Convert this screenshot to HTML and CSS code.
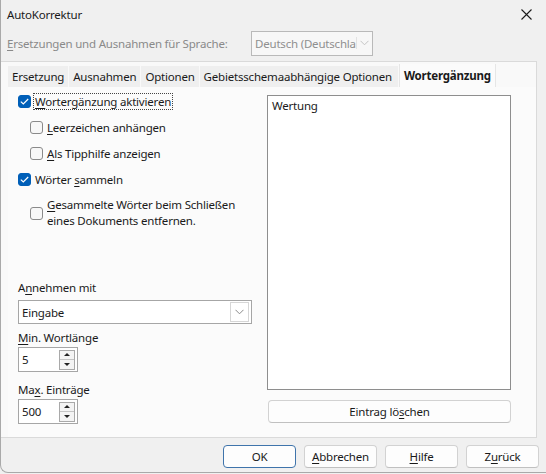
FILE: index.html
```html
<!DOCTYPE html>
<html lang="de">
<head>
    <meta charset="UTF-8">
    <title>AutoKorrektur</title>
    <link rel="stylesheet" href="styles.css">
</head>
<body>
    <div class="dialog">
        <div class="titlebar">
            <span class="title">AutoKorrektur</span>
            <svg class="close" width="11" height="11" viewBox="0 0 11 11">
                <path d="M0.5 0.5 L10.5 10.5 M10.5 0.5 L0.5 10.5" stroke="#1b1b1b" stroke-width="1.1" fill="none"/>
            </svg>
        </div>

        <div class="lang-row">
            <span class="lang-label"><u>E</u>rsetzungen und Ausnahmen für Sprache:</span>
            <div class="lang-combo">
                <span class="lang-value">Deutsch (Deutschla</span>
                <svg class="chev" width="9" height="6" viewBox="0 0 9 6"><path d="M0.5 0.8 L4.5 4.8 L8.5 0.8" stroke="#c4c4c4" fill="none"/></svg>
            </div>
        </div>

        <div class="notebook">
            <div class="tabs">
                <div class="tab">Ersetzung</div>
                <div class="tab">Ausnahmen</div>
                <div class="tab">Optionen</div>
                <div class="tab">Gebietsschemaabhängige Optionen</div>
                <div class="tab active">Wortergänzung</div>
            </div>

            <div class="page">
                <div class="left">
                    <label class="check">
                        <span class="box on"><svg width="9" height="7" viewBox="0 0 9 7"><path d="M0.8 3.6 L3.3 6 L8.2 1" stroke="#fff" stroke-width="1.2" fill="none"/></svg></span>
                        <span class="focus"><u>W</u>ortergänzung aktivieren</span>
                    </label>
                    <label class="check sub">
                        <span class="box"></span>
                        <span><u>L</u>eerzeichen anhängen</span>
                    </label>
                    <label class="check sub">
                        <span class="box"></span>
                        <span><u>A</u>ls Tipphilfe anzeigen</span>
                    </label>
                    <label class="check">
                        <span class="box on"><svg width="9" height="7" viewBox="0 0 9 7"><path d="M0.8 3.6 L3.3 6 L8.2 1" stroke="#fff" stroke-width="1.2" fill="none"/></svg></span>
                        <span>Wörter <u>s</u>ammeln</span>
                    </label>
                    <label class="check sub two">
                        <span class="box"></span>
                        <span><u>G</u>esammelte Wörter beim Schließen<br>eines Dokuments entfernen.</span>
                    </label>

                    <div class="field first">A<u>n</u>nehmen mit</div>
                    <div class="combo">
                        <span>Eingabe</span>
                        <span class="drop"><svg width="9" height="6" viewBox="0 0 9 6"><path d="M0.5 0.8 L4.5 4.8 L8.5 0.8" stroke="#8a8a8a" fill="none"/></svg></span>
                    </div>

                    <div class="field mid"><u>M</u>in. Wortlänge</div>
                    <div class="spin">
                        <span>5</span>
                        <span class="arrows">
                            <span class="up"></span>
                            <span class="down"></span>
                        </span>
                    </div>

                    <div class="field last">Ma<u>x</u>. Einträge</div>
                    <div class="spin">
                        <span>500</span>
                        <span class="arrows">
                            <span class="up"></span>
                            <span class="down"></span>
                        </span>
                    </div>
                </div>

                <div class="right">
                    <div class="list">
                        <div class="item">Wertung</div>
                    </div>
                    <button class="btn wide">Eintrag lö<u>s</u>chen</button>
                </div>
            </div>
        </div>

        <div class="footer">
            <button class="btn default">OK</button>
            <button class="btn"><u>A</u>bbrechen</button>
            <button class="btn"><u>H</u>ilfe</button>
            <button class="btn">Z<u>u</u>rück</button>
        </div>
    </div>
</body>
</html>
```

FILE: styles.css
```css
html, body {
    margin: 0;
    background: #f0f0f0;
}
body {
    font-family: "Noto Sans", "Open Sans", sans-serif;
    font-size: 11.5px;
    letter-spacing: -0.2px;
    color: #1a1a1a;
}
u {
    text-decoration-thickness: 1px;
    text-underline-offset: 2px;
}
.dialog {
    width: 546px;
    height: 473px;
    box-sizing: border-box;
    border: 1px solid #a9a9a9;
    border-top: none;
    border-right: none;
    border-radius: 0 0 0 8px;
    background: #f0f0f0;
    display: flex;
    flex-direction: column;
}
.titlebar {
    height: 29px;
    display: flex;
    align-items: center;
    justify-content: space-between;
    padding: 0 14px 0 6px;
}
.lang-row {
    display: flex;
    align-items: center;
    height: 25px;
    margin-top: 2px;
    padding-left: 6px;
}
.lang-label {
    color: #8a8a8a;
    width: 244px;
}
.lang-combo {
    width: 120px;
    height: 23px;
    border: 1px solid #b9b9b9;
    background: #f7f7f7;
    display: flex;
    align-items: center;
    overflow: hidden;
    position: relative;
}
.lang-value {
    color: #8f8f8f;
    padding-left: 3px;
    white-space: nowrap;
}
.lang-combo .chev {
    position: absolute;
    right: 0;
    top: 5px;
    padding: 3px 3px;
    background: #f7f7f7;
    border-left: 1px solid #e2e2e2;
}
.notebook {
    margin-top: 5px;
    width: 536px;
    height: 377px;
    box-sizing: border-box;
    border-top: 1px solid #dadada;
    border-right: 1px solid #dadada;
    border-bottom: 1px solid #dadada;
    background: #f9f9f9;
    display: flex;
    flex-direction: column;
}
.tabs {
    display: flex;
    align-items: flex-end;
    height: 25px;
    padding-left: 7px;
    gap: 1px;
}
.tab {
    height: 21px;
    line-height: 21px;
    padding: 0 4px;
    background: #efefef;
    white-space: nowrap;
}
.tab:nth-child(4) {
    padding-right: 6px;
}
.tab.active {
    height: 23px;
    line-height: 23px;
    background: #fbfbfb;
    font-weight: bold;
    border-left: 1px solid #e6e6e6;
    border-right: 1px solid #e6e6e6;
    padding: 0 4px;
}
.page {
    flex: 1;
    display: flex;
    padding: 6px 25px 0 17px;
    background: #fbfbfb;
    margin-left: 7px;
}
.left {
    width: 235px;
    display: flex;
    flex-direction: column;
    margin-left: -7px;
}
.check {
    display: flex;
    align-items: center;
    height: 16px;
    margin-bottom: 10px;
    gap: 4px;
}
.check.sub {
    padding-left: 12px;
}
.check.two {
    height: 32px;
    margin-top: 0;
    line-height: 16px;
}
.box {
    width: 11px;
    height: 11px;
    border: 1px solid #8a8a8a;
    border-radius: 3px;
    background: #f7f7f7;
    flex: none;
    display: flex;
    align-items: center;
    justify-content: center;
}
.box.on {
    background: #005fb8;
    border-color: #005fb8;
}
.focus {
    outline: 1px dotted #444;
    outline-offset: 0;
    padding: 0 1px;
    margin-left: -1px;
}
.field {
    height: 16px;
    line-height: 16px;
}
.field.first {
    margin-top: 41px;
}
.field.mid {
    margin-top: 6px;
}
.field.last {
    margin-top: 10px;
}
.combo {
    margin-top: 4px;
    width: 234px;
    height: 24px;
    box-sizing: border-box;
    border: 1px solid #a6a6a6;
    background: #fff;
    display: flex;
    align-items: center;
    justify-content: space-between;
    padding-left: 3px;
}
.combo .drop {
    width: 17px;
    height: 18px;
    margin-right: 2px;
    border: 1px solid #d6d6d6;
    display: flex;
    align-items: center;
    justify-content: center;
}
.spin {
    margin-top: 1px;
    width: 60px;
    height: 25px;
    box-sizing: border-box;
    border: 1px solid #a6a6a6;
    background: #fff;
    display: flex;
    align-items: center;
    justify-content: space-between;
    padding-left: 3px;
}
.arrows {
    width: 14px;
    height: 18px;
    margin-right: 2px;
    border: 1px solid #a9a9a9;
    background: #f4f4f4;
    display: flex;
    flex-direction: column;
}
.arrows span {
    flex: 1;
    display: flex;
    align-items: center;
    justify-content: center;
}
.arrows .up {
    border-bottom: 1px solid #c4c4c4;
}
.arrows .up::before {
    content: "";
    border-left: 3px solid transparent;
    border-right: 3px solid transparent;
    border-bottom: 3px solid #222;
}
.arrows .down::before {
    content: "";
    border-left: 3px solid transparent;
    border-right: 3px solid transparent;
    border-top: 3px solid #222;
}
.right {
    margin-left: 15px;
    width: 244px;
    display: flex;
    flex-direction: column;
    gap: 10px;
    margin-top: 2px;
}
.list {
    height: 295px;
    box-sizing: border-box;
    border: 1px solid #8e8e8e;
    background: #fff;
    padding: 2px 4px;
}
.btn {
    font-family: inherit;
    font-size: 11.5px;
    letter-spacing: -0.2px;
    color: #1a1a1a;
    height: 23px;
    box-sizing: border-box;
    border: 1px solid #d2d2d2;
    border-bottom-color: #c0c0c0;
    border-radius: 4px;
    background: #fdfdfd;
    padding: 0;
}
.btn.wide {
    width: 243px;
    margin-left: 1px;
}
.footer {
    display: flex;
    justify-content: flex-end;
    gap: 8px;
    padding: 7px 7px 0 0;
}
.footer .btn {
    width: 73px;
}
.btn.default {
    border: 1px solid #3f74ab;
}
```
